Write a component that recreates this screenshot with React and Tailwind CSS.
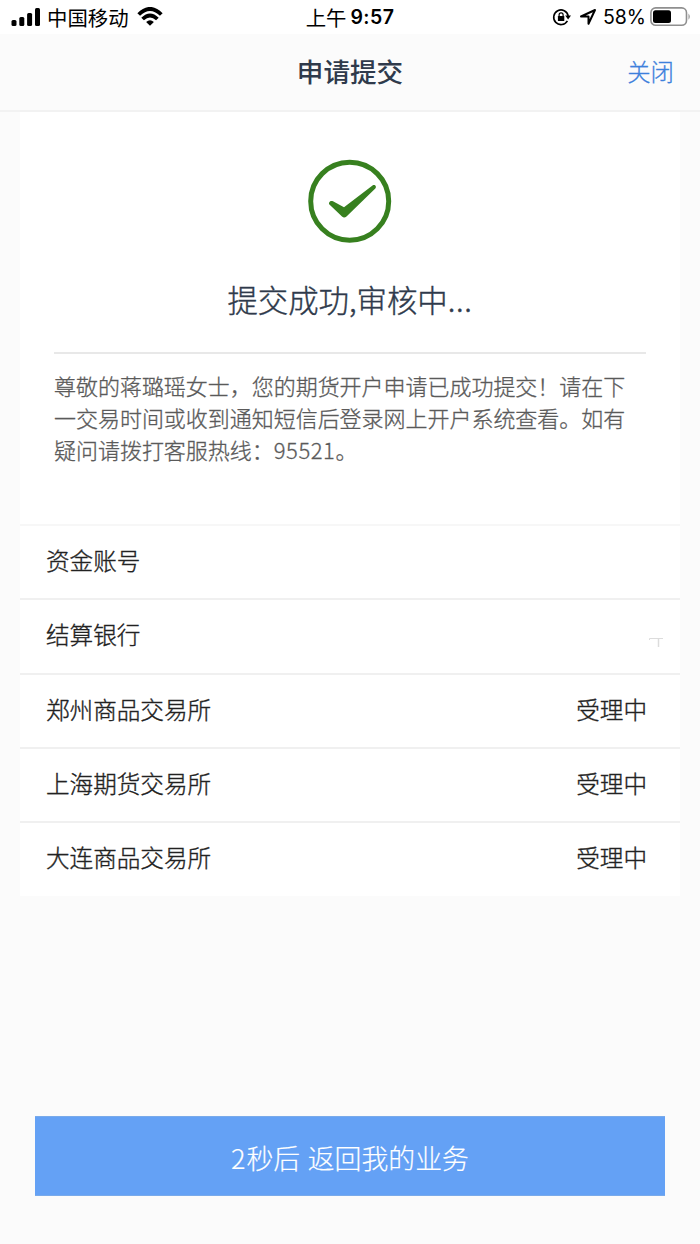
import React from "react";

const exchanges = [
  { label: "资金账号", value: "" },
  { label: "结算银行", value: "", mark: true },
  { label: "郑州商品交易所", value: "受理中" },
  { label: "上海期货交易所", value: "受理中" },
  { label: "大连商品交易所", value: "受理中" },
];

function SignalIcon() {
  return (
    <svg width="30" height="20" viewBox="0 0 30 20" fill="#000">
      <rect x="0.5" y="13" width="5" height="6" rx="1.5" />
      <rect x="8.3" y="10" width="5" height="9" rx="1.5" />
      <rect x="16.1" y="6" width="5" height="13" rx="1.5" />
      <rect x="24" y="1" width="5" height="18" rx="1.5" />
    </svg>
  );
}

function WifiIcon() {
  return (
    <svg width="26" height="20" viewBox="0 0 26 20" fill="none" stroke="#000" strokeWidth="3.8">
      <path d="M1.7 7.5Q13-3.7 24.3 7.5" />
      <path d="M5.6 12Q13 4.8 20.4 12" />
      <path d="M9.1 14.9Q13 11.6 16.9 14.9L13 18.8Z" fill="#000" stroke="none" />
    </svg>
  );
}

function RotationLockIcon() {
  return (
    <svg width="20" height="18" viewBox="0 0 20 18" fill="none" stroke="#000">
      <path d="M15.4 12.8A7.3 7.3 0 1 1 16.2 8" strokeWidth="1.6" />
      <path d="M13.2 7.6H19L16.1 11.4Z" fill="#000" stroke="none" />
      <rect x="5.9" y="8" width="6.4" height="5" rx="0.6" fill="#000" stroke="none" />
      <path d="M7.1 8.3V6.8a2 2 0 0 1 4 0v1.5" strokeWidth="1.2" />
    </svg>
  );
}

function LocationIcon() {
  return (
    <svg width="18" height="18" viewBox="0 0 18 18" fill="none" stroke="#000" strokeWidth="2" strokeLinejoin="round">
      <path d="M2 8.5L16 2L9.5 15.8V8.5Z" />
    </svg>
  );
}

function BatteryIcon() {
  return (
    <svg width="42" height="20" viewBox="0 0 42 20">
      <rect x="0.9" y="0.9" width="35.6" height="17.4" rx="4.8" fill="none" stroke="#8f8f8f" strokeWidth="1.6" />
      <rect x="3" y="3.2" width="18" height="12.8" rx="2.5" fill="#000" />
      <path d="M38.5 6.5Q41 9.6 38.5 12.7Z" fill="#8f8f8f" />
    </svg>
  );
}

function SuccessIcon() {
  return (
    <svg width="84" height="84" viewBox="0 0 84 84">
      <circle cx="41.7" cy="42.2" r="39" fill="#fff" stroke="#37801f" strokeWidth="5" />
      <path
        d="M21.4 45.5C20 43.5 22.5 41 25 42.3L36 48.2L64.5 26.6C67 25 69 27.8 67.3 29.6L38.5 57.6C36.8 59 35.3 58.8 34 57.6Z"
        fill="#37801f"
      />
    </svg>
  );
}

export default function App() {
  return (
    <div className="flex h-[1244px] w-[700px] flex-col bg-[#fbfbfb] font-['Noto_Sans_CJK_SC',sans-serif]">
      <div className="grid h-[34px] shrink-0 grid-cols-3 items-center bg-white text-black">
        <div className="flex items-center pl-[11px]">
          <SignalIcon />
          <span className="ml-[6px] text-[20.4px] leading-[34px]">中国移动</span>
          <span className="ml-[8px]"><WifiIcon /></span>
        </div>
        <div className="flex items-center justify-center whitespace-nowrap">
          <span className="text-[20.4px] leading-[34px]">上午</span>
          <span className="ml-[4px] font-[Inter,sans-serif] text-[19.5px] leading-[34px] font-semibold tracking-[0.4px]">9:57</span>
        </div>
        <div className="flex items-center justify-end pr-[8px]">
          <RotationLockIcon />
          <span className="ml-[7px]"><LocationIcon /></span>
          <span className="ml-[6px] font-[Inter,sans-serif] text-[19.5px] leading-[34px]">58%</span>
          <span className="ml-[4px]"><BatteryIcon /></span>
        </div>
      </div>

      <header className="grid h-[78px] shrink-0 grid-cols-3 items-center border-b-2 border-[#f2f2f2] pb-[2px]">
        <span />
        <h1 className="text-center text-[26.6px] leading-[40px] font-medium text-[#2f3a4b]">申请提交</h1>
        <button className="justify-self-end pr-[26px] text-[23.4px] leading-[40px] font-light text-[#3d80dc] [-webkit-text-stroke:0.3px]">关闭</button>
      </header>

      <main className="mx-5 h-[784px] shrink-0 bg-white">
        <section className="flex h-[412px] flex-col items-center px-[34px] pt-[47px]">
          <SuccessIcon />
          <h2 className="mt-[33px] text-[30.4px] leading-[46px] font-light whitespace-nowrap text-[#2f3a4b] [-webkit-text-stroke:0.4px]">
            提交成功,审核中<span className="tracking-[0.7px]">...</span>
          </h2>
          <div className="mt-[30px] h-[2px] w-full shrink-0 bg-[#e8e8e8]" />
          <p className="mt-[16px] w-full text-[21.97px] leading-[32px] font-light whitespace-nowrap text-[#5a5a5a] [-webkit-text-stroke:0.3px]">
            <span className="block">尊敬的蒋璐瑶女士，您的期货开户申请已成功提交！请在下</span>
            <span className="block">一交易时间或收到通知短信后登录网上开户系统查看。如有</span>
            <span className="block">疑问请拨打客服热线：<span className="tracking-[0.6px]">95521</span>。</span>
          </p>
        </section>
        <ul>
          {exchanges.map((row) => (
            <li
              key={row.label}
              className="flex h-[74.3px] items-center justify-between border-t-2 border-[#f0f0f0] pr-[33px] pb-[4px] pl-[26px] text-[23.6px] leading-[36px] font-light text-[#222] [-webkit-text-stroke:0.35px] first:border-[#f7f7f7]"
            >
              <span>{row.label}</span>
              <span>{row.value}</span>
              {row.mark && (
                <svg className="mt-[18px] -mr-[17px]" width="15" height="12" viewBox="0 0 15 12" fill="none" stroke="#dcdcdc">
                  <path d="M0.5 3V1.5H14" />
                  <path d="M9.5 2V10" strokeWidth="1.5" />
                </svg>
              )}
            </li>
          ))}
        </ul>
      </main>

      <button className="mx-[35px] mt-[220px] h-[80px] shrink-0 border-y border-[#79aaea] bg-[#64a1f5] pt-[4px] text-[26.9px] leading-[40px] font-light text-white [-webkit-text-stroke:0.2px]">
        <span className="tracking-[1px]">2</span>秒后<span className="tracking-[1.5px]"> </span>返回我的业务
      </button>
    </div>
  );
}
